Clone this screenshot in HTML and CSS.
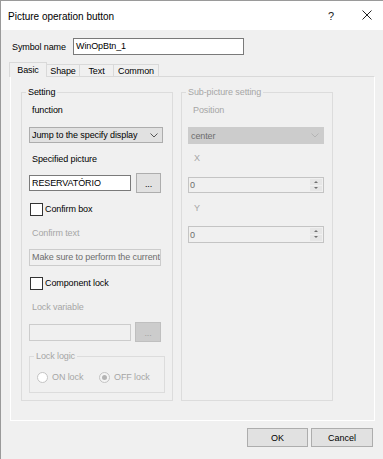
FILE: index.html
```html
<!DOCTYPE html>
<html lang="en">
<head>
    <meta charset="UTF-8">
    <title>Picture operation button</title>
    <link rel="stylesheet" href="styles.css">
</head>
<body>
    <div class="window">
        <div class="titlebar">
            <span class="title">Picture operation button</span>
            <span class="help">?</span>
            <span class="close">
                <svg width="10" height="10" viewBox="0 0 10 10"><path d="M0.5 0.5 L9.5 9.5 M9.5 0.5 L0.5 9.5" stroke="#222" stroke-width="1" fill="none"/></svg>
            </span>
        </div>

        <div class="name-row">
            <span class="name-label">Symbol name</span>
            <div class="textbox name-box">WinOpBtn_1</div>
        </div>

        <div class="tabs">
            <div class="tab active tab-basic">Basic</div>
            <div class="tab tab-shape">Shape</div>
            <div class="tab tab-text">Text</div>
            <div class="tab tab-common">Common</div>
        </div>

        <div class="page">
            <!-- left group -->
            <div class="group setting">
                <span class="group-title">Setting</span>
                <div class="lbl m10">function</div>
                <div class="combo m10 w134">
                    <span>Jump to the specify display</span>
                    <svg width="8" height="5" viewBox="0 0 8 5"><polyline points="0.5,0.5 4,4 7.5,0.5" stroke="#555" fill="none"/></svg>
                </div>
                <div class="lbl m9">Specified picture</div>
                <div class="pick-row m7">
                    <div class="textbox pick-box">RESERVATÓRIO</div>
                    <div class="dots">...</div>
                </div>
                <div class="check-row m9">
                    <span class="checkbox"></span>
                    <span>Confirm box</span>
                </div>
                <div class="lbl disabled m10">Confirm text</div>
                <div class="textbox off confirm-box m9">Make sure to perform the current</div>
                <div class="check-row m10">
                    <span class="checkbox"></span>
                    <span>Component lock</span>
                </div>
                <div class="lbl disabled m10">Lock variable</div>
                <div class="pick-row m8">
                    <div class="textbox off pick-box lock-box"></div>
                    <div class="dots off">...</div>
                </div>
                <div class="group lock-group">
                    <span class="group-title disabled">Lock logic</span>
                    <div class="radio-row">
                        <div class="radio-item">
                            <span class="radio"></span>
                            <span>ON lock</span>
                        </div>
                        <div class="radio-item">
                            <span class="radio checked"></span>
                            <span>OFF lock</span>
                        </div>
                    </div>
                </div>
            </div>

            <!-- right group -->
            <div class="group sub">
                <span class="group-title disabled">Sub-picture setting</span>
                <div class="lbl disabled m10 pad5">Position</div>
                <div class="combo off m10 w136">
                    <span>center</span>
                    <svg width="8" height="5" viewBox="0 0 8 5"><polyline points="0.5,0.5 4,4 7.5,0.5" stroke="#b4b4b4" fill="none"/></svg>
                </div>
                <div class="lbl disabled m7 pad6">X</div>
                <div class="spin m12">
                    <span class="spin-val">0</span>
                    <div class="spin-btns">
                        <span class="spin-up"></span>
                        <span class="spin-down"></span>
                    </div>
                </div>
                <div class="lbl disabled m8 pad6">Y</div>
                <div class="spin m11 tall">
                    <span class="spin-val">0</span>
                    <div class="spin-btns">
                        <span class="spin-up"></span>
                        <span class="spin-down"></span>
                    </div>
                </div>
            </div>
        </div>

        <div class="actions">
            <button class="btn ok">OK</button>
            <button class="btn cancel">Cancel</button>
        </div>
    </div>
</body>
</html>
```

FILE: styles.css
```css
body {
    margin: 0;
    font-family: "Liberation Sans", Arial, sans-serif;
    font-size: 9px;
    letter-spacing: -0.1px;
    color: #000;
}

.window {
    width: 382px;
    height: 458px;
    border-left: 1px solid #9a9a9a;
    border-top: 1px solid #9a9a9a;
    background: #f0f0f0;
    overflow: hidden;
}

.titlebar {
    height: 29px;
    background: #fff;
    display: flex;
    align-items: center;
}

.title {
    flex: 1;
    padding-left: 7px;
    font-size: 10px;
    letter-spacing: 0;
    margin-top: 1px;
}

.help {
    font-size: 11px;
    margin-right: 28px;
    color: #222;
}

.close {
    display: flex;
    margin-right: 11px;
    margin-top: -2px;
}

.name-row {
    display: flex;
    align-items: center;
    height: 17px;
    margin-top: 8px;
    padding-left: 11px;
}

.name-label {
    width: 61px;
}

.textbox {
    box-sizing: border-box;
    height: 17px;
    border: 1px solid #7a7a7a;
    background: #fff;
    padding-left: 2px;
    line-height: 15px;
    white-space: nowrap;
    overflow: hidden;
}

.name-box {
    width: 171px;
}

/* tabs */
.tabs {
    display: flex;
    align-items: flex-end;
    height: 14px;
    margin-top: 7px;
    padding-left: 8px;
    position: relative;
    z-index: 1;
}

.tab {
    box-sizing: border-box;
    height: 12px;
    line-height: 12px;
    border: 1px solid #d9d9d9;
    border-bottom: none;
    margin-left: -1px;
    text-align: center;
    background: #f0f0f0;
}

.tab.active {
    height: 15px;
    line-height: 14px;
    margin-left: 0;
    margin-bottom: -1px;
    position: relative;
    z-index: 2;
}

.tab-basic { width: 38px; }
.tab-shape { width: 34px; }
.tab-text { width: 35px; }
.tab-common { width: 46px; }

.page {
    box-sizing: border-box;
    width: 365px;
    height: 345px;
    margin-left: 9px;
    border-top: 1px solid #d9d9d9;
    border-left: 1px solid #fff;
    border-right: 1px solid #fff;
    border-bottom: 1px solid #fff;
    padding: 15px 0 0 10px;
    display: flex;
    gap: 8px;
    align-items: flex-start;
}

/* group boxes */
.group {
    position: relative;
    box-sizing: border-box;
    width: 152px;
    height: 309px;
    border: 1px solid #dcdcdc;
    padding-left: 7px;
    display: flex;
    flex-direction: column;
    align-items: flex-start;
}

.group.sub {
    padding-left: 6px;
}

.group-title {
    position: absolute;
    top: -8px;
    left: 4px;
    padding: 0 2px;
    line-height: 14px;
    background: #f0f0f0;
}

.lbl {
    height: 14px;
    line-height: 14px;
    padding-left: 3px;
}

.pad5 { padding-left: 5px; }
.pad6 { padding-left: 6px; }

.disabled {
    color: #a6a6a6;
}

.m7 { margin-top: 7px; }
.m8 { margin-top: 8px; }
.m9 { margin-top: 9px; }
.m10 { margin-top: 10px; }
.m11 { margin-top: 11px; }
.m12 { margin-top: 12px; }

.combo {
    box-sizing: border-box;
    display: flex;
    align-items: center;
    justify-content: space-between;
    height: 16px;
    border: 1px solid #adadad;
    background: #e1e1e1;
    padding: 0 4px 0 2px;
}

.combo.off {
    height: 17px;
    border-color: #cccccc;
    background: #cccccc;
    color: #6d6d6d;
}

.w134 { width: 134px; }
.w136 { width: 136px; }

.pick-row {
    display: flex;
    align-items: center;
    height: 20px;
}

.pick-box {
    width: 102px;
    height: 16px;
    line-height: 14px;
}

.lock-box {
    height: 17px;
}

.dots {
    box-sizing: border-box;
    width: 25px;
    height: 20px;
    margin-left: 5px;
    border: 1px solid #adadad;
    background: #e1e1e1;
    text-align: center;
    line-height: 20px;
}

.dots.off {
    width: 26px;
    margin-left: 4px;
    border-color: #bfbfbf;
    background: #cccccc;
    color: #a0a0a0;
}

.textbox.off {
    border-color: #cccccc;
    background: #f0f0f0;
    color: #6d6d6d;
}

.confirm-box {
    width: 132px;
}

.check-row {
    display: flex;
    align-items: center;
    height: 14px;
    gap: 2px;
}

.checkbox {
    box-sizing: border-box;
    width: 13px;
    height: 13px;
    border: 1px solid #333;
    background: #fff;
    margin-left: 1px;
}

.lock-group {
    width: 136px;
    height: 37px;
    margin-top: 14px;
}

.radio-row {
    display: flex;
    align-items: center;
    height: 14px;
    margin-top: 13px;
    color: #a6a6a6;
}

.radio-item {
    display: flex;
    align-items: center;
    gap: 4px;
    width: 62px;
}

.radio {
    box-sizing: border-box;
    width: 11px;
    height: 11px;
    border: 1px solid #c4c4c4;
    border-radius: 50%;
    background: #fff;
    display: flex;
    align-items: center;
    justify-content: center;
}

.radio.checked {
    background: #f4f4f4;
}

.radio.checked::after {
    content: "";
    width: 5px;
    height: 5px;
    border-radius: 50%;
    background: #b4b4b4;
}

/* spin boxes */
.spin {
    box-sizing: border-box;
    display: flex;
    align-items: center;
    justify-content: space-between;
    width: 136px;
    height: 16px;
    border: 1px solid #c4c4c4;
    background: #f0f0f0;
    padding: 0 1px 0 1px;
}

.spin.tall {
    height: 17px;
}

.spin-val {
    color: #6d6d6d;
}

.spin-btns {
    display: flex;
    flex-direction: column;
    width: 12px;
    height: 100%;
    gap: 1px;
    padding: 1px 0;
    box-sizing: border-box;
}

.spin-up, .spin-down {
    flex: 1;
    background: #e6e6e6;
    position: relative;
}

.spin-up::after, .spin-down::after {
    content: "";
    position: absolute;
    left: 4px;
    top: 2px;
    border-left: 2px solid transparent;
    border-right: 2px solid transparent;
}

.spin-up::after {
    border-bottom: 2px solid #707070;
}

.spin-down::after {
    top: 1px;
    border-top: 2px solid #707070;
}

/* bottom buttons */
.actions {
    display: flex;
    justify-content: flex-end;
    gap: 3px;
    margin-top: 7px;
    padding-right: 10px;
}

.btn {
    box-sizing: border-box;
    height: 19px;
    border: 1px solid #adadad;
    background: #e1e1e1;
    font-family: "Liberation Sans", Arial, sans-serif;
    font-size: 9px;
    padding: 0;
}

.ok { width: 61px; }
.cancel { width: 62px; }
```
